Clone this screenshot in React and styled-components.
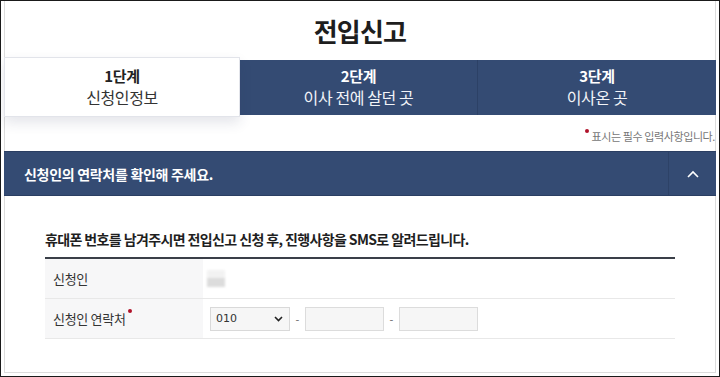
import React from "react";
import styled, { createGlobalStyle } from "styled-components";

const Global = createGlobalStyle`
  html, body { margin: 0; padding: 0; background: #fff; }
  body { font-family: "Noto Sans CJK KR", "Noto Sans", sans-serif; }
  * { box-sizing: border-box; }
`;

const Frame = styled.div`
  width: 720px;
  height: 377px;
  border: 1px solid #1a1a1a;
  padding: 0 3px 3px 3px;
  overflow: hidden;
  background: #fff;
`;

const Panel = styled.div`
  height: 100%;
  border: 1px solid #dcdcdc;
  border-top: none;
  display: flex;
  flex-direction: column;
`;

const Title = styled.h1`
  margin: 0;
  height: 56px;
  display: flex;
  align-items: center;
  justify-content: center;
  font-size: 26px;
  font-weight: 700;
  color: #1e1e1e;
  letter-spacing: -0.8px;
  padding-top: 2px;
`;

const Tabs = styled.div`
  display: grid;
  grid-template-columns: 236px 237px 1fr;
  height: 60px;
  align-items: center;
  margin-left: -1px;
  margin-right: -1px;
`;

const Tab = styled.div`
  height: ${(p) => (p.$active ? "60px" : "55px")};
  display: flex;
  flex-direction: column;
  align-items: center;
  justify-content: center;
  background: ${(p) => (p.$active ? "#fff" : "#344b73")};
  color: ${(p) => (p.$active ? "#222" : "#fff")};
  border: ${(p) => (p.$active ? "1px solid #e2e4ea" : "none")};
  border-left: ${(p) => (p.$divider ? "1px solid #2c4166" : undefined)};
  box-shadow: ${(p) => (p.$active ? "0 6px 12px rgba(40,50,90,0.12)" : "none")};
  position: relative;
  z-index: ${(p) => (p.$active ? 1 : 0)};
`;

const StepNo = styled.div`
  font-size: 15px;
  font-weight: 700;
  line-height: 20px;
  letter-spacing: -0.3px;
`;

const StepName = styled.div`
  font-size: 16px;
  font-weight: 400;
  line-height: 22px;
  letter-spacing: -0.4px;
  color: ${(p) => (p.$active ? "#333" : "#f2f4f8")};
`;

const Note = styled.div`
  height: 34px;
  display: flex;
  align-items: center;
  justify-content: flex-end;
  padding: 4px 0 0 0;
  font-size: 11px;
  color: #777;
  letter-spacing: -0.4px;
`;

const Dot = styled.span`
  display: inline-block;
  width: 4px;
  height: 4px;
  border-radius: 50%;
  background: #b0122a;
  margin-right: 3px;
  transform: translateY(-5px);
`;

const SectionHead = styled.div`
  height: 45px;
  background: #344b73;
  border-top: 1px solid #2a3e62;
  border-bottom: 1px solid #2a3e62;
  display: flex;
  align-items: stretch;
  margin: 0 -1px;
`;

const SectionTitle = styled.div`
  flex: 1;
  display: flex;
  align-items: center;
  padding-left: 20px;
  color: #fff;
  font-size: 14px;
  font-weight: 700;
  letter-spacing: -0.3px;
`;

const Toggle = styled.div`
  width: 48px;
  border-left: 1px solid #2d4267;
  display: flex;
  align-items: center;
  justify-content: center;
  color: #fff;
`;

const Body = styled.div`
  padding: 33px 40px 0 40px;
`;

const Lead = styled.div`
  font-size: 14px;
  font-weight: 700;
  color: #1f1f1f;
  letter-spacing: -0.62px;
  line-height: 20px;
  margin-bottom: 8px;
`;

const Table = styled.div`
  border-top: 2px solid #3a3f48;
`;

const Row = styled.div`
  display: grid;
  grid-template-columns: 158px 1fr;
  height: 40px;
  border-bottom: 1px solid #e8e8e8;
`;

const Label = styled.div`
  background: #f7f7f8;
  display: flex;
  align-items: center;
  padding-left: 8px;
  font-size: 13px;
  color: #333;
  letter-spacing: -0.3px;
`;

const ReqDot = styled.span`
  display: inline-block;
  width: 4px;
  height: 4px;
  border-radius: 50%;
  background: #b0122a;
  margin-left: 2px;
  transform: translateY(-8px);
`;

const Cell = styled.div`
  display: flex;
  align-items: center;
  padding-left: ${(p) => p.$pad || 7}px;
`;

const Blur = styled.div`
  width: 18px;
  height: 17px;
  background: linear-gradient(180deg, #f1f1f1 0 45%, #d9d9d9 45% 100%);
  filter: blur(1px);
  opacity: 0.9;
`;

const Select = styled.div`
  width: 80px;
  height: 24px;
  border: 1px solid #d9d9d9;
  background: #f6f6f6;
  display: flex;
  align-items: center;
  justify-content: space-between;
  padding: 0 6px 0 5px;
  font-size: 11px;
  color: #333;
  font-family: "DejaVu Sans", sans-serif;
`;

const Dash = styled.span`
  width: 15px;
  text-align: center;
  font-size: 11px;
  color: #666;
`;

const Input = styled.div`
  width: 79px;
  height: 24px;
  border: 1px solid #dcdcdc;
  background: #f6f6f6;
`;

export default function App() {
  return (
    <>
      <Global />
      <Frame>
        <Panel>
          <Title>전입신고</Title>
          <Tabs>
            <Tab $active>
              <StepNo>1단계</StepNo>
              <StepName $active>신청인정보</StepName>
            </Tab>
            <Tab>
              <StepNo>2단계</StepNo>
              <StepName>이사 전에 살던 곳</StepName>
            </Tab>
            <Tab $divider>
              <StepNo>3단계</StepNo>
              <StepName>이사온 곳</StepName>
            </Tab>
          </Tabs>
          <Note>
            <Dot />
            표시는 필수 입력사항입니다.
          </Note>
          <SectionHead>
            <SectionTitle>신청인의 연락처를 확인해 주세요.</SectionTitle>
            <Toggle>
              <svg width="12" height="8" viewBox="0 0 12 8" fill="none">
                <path d="M1 7 L6 2 L11 7" stroke="#fff" strokeWidth="1.6" />
              </svg>
            </Toggle>
          </SectionHead>
          <Body>
            <Lead>휴대폰 번호를 남겨주시면 전입신고 신청 후, 진행사항을 SMS로 알려드립니다.</Lead>
            <Table>
              <Row>
                <Label>신청인</Label>
                <Cell $pad={4}>
                  <Blur />
                </Cell>
              </Row>
              <Row>
                <Label>
                  신청인 연락처
                  <ReqDot />
                </Label>
                <Cell>
                  <Select>
                    <span>010</span>
                    <svg width="9" height="6" viewBox="0 0 9 6" fill="none">
                      <path d="M1 1 L4.5 4.5 L8 1" stroke="#222" strokeWidth="1.6" />
                    </svg>
                  </Select>
                  <Dash>-</Dash>
                  <Input />
                  <Dash>-</Dash>
                  <Input />
                </Cell>
              </Row>
            </Table>
          </Body>
        </Panel>
      </Frame>
    </>
  );
}
